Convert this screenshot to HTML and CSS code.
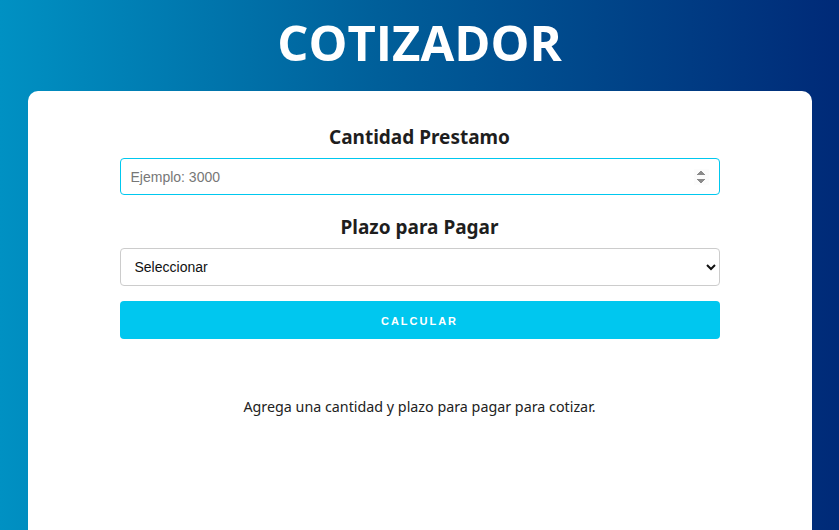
FILE: index.html
```html
<!DOCTYPE html>
<html lang="es">
<head>
<meta charset="utf-8">
<title>Cotizador</title>
<link rel="stylesheet" href="styles.css">
</head>
<body>
<header class="header">
  <h1 class="title">COTIZADOR</h1>
</header>
<main class="card">
  <form class="form">
    <label class="label" for="cantidad">Cantidad Prestamo</label>
    <input class="input input-number" id="cantidad" type="number" placeholder="Ejemplo: 3000" autofocus>
    <label class="label" for="plazo">Plazo para Pagar</label>
    <select class="input select" id="plazo">
      <option>Seleccionar</option>
      <option>3 meses</option>
      <option>6 meses</option>
      <option>12 meses</option>
      <option>24 meses</option>
    </select>
    <button class="button" type="button">Calcular</button>
  </form>
  <p class="message">Agrega una cantidad y plazo para pagar para cotizar.</p>
</main>
</body>
</html>
```
FILE: styles.css
```css
html, body {
  margin: 0;
  padding: 0;
  height: 100%;
}
body {
  background: linear-gradient(to right, #0091c3 0%, #005f9a 45%, #002a78 100%);
  font-family: "Noto Sans", sans-serif;
  color: #222;
  overflow: hidden;
}
.header {
  height: 91px;
  display: flex;
  align-items: center;
  justify-content: center;
}
.title {
  margin: 0;
  color: #fff;
  font-family: "Open Sans", sans-serif;
  font-weight: 700;
  font-size: 49px;
  letter-spacing: 0;
  line-height: 1;
  padding-bottom: 6px;
}
.card {
  width: 784px;
  margin: 0 auto;
  background: #fff;
  border-radius: 10px 10px 0 0;
  min-height: 440px;
  padding-top: 33px;
  box-sizing: border-box;
}
.form {
  width: 600px;
  margin: 0 auto;
  display: flex;
  flex-direction: column;
}
.label {
  text-align: center;
  font-weight: 700;
  font-size: 19px;
  color: #1e1e1e;
  line-height: 26px;
  margin-bottom: 8px;
}
.input {
  box-sizing: border-box;
  height: 37px;
  border: 1px solid #ccc;
  border-radius: 4px;
  font-family: "Liberation Sans", Arial, sans-serif;
  font-size: 14px;
  padding: 0 10px;
  background: #fff;
  color: #111;
}
.input-number {
  border-color: #00c8ef;
  outline: none;
  margin-bottom: 19px;
}
.input-number:focus {
  outline: none;
  border-color: #00c8ef;
}
.input::placeholder {
  color: #777;
}
.select {
  height: 38px;
  padding-left: 10px;
  margin-bottom: 15px;
}
.button {
  height: 38px;
  border: none;
  border-radius: 4px;
  background: #00c7ef;
  color: #fff;
  text-transform: uppercase;
  font-family: "Liberation Sans", Arial, sans-serif;
  font-weight: 700;
  font-size: 11px;
  letter-spacing: 2px;
  padding-top: 2px;
}
.message {
  text-align: center;
  margin: 58px 0 0;
  font-size: 14.3px;
  color: #222;
}
```
